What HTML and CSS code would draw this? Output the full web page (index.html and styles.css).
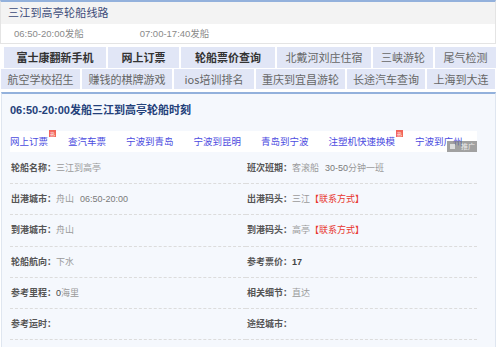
FILE: index.html
```html
<!DOCTYPE html>
<html>
  <head>
    <meta charset="UTF-8" />
    <title>三江到高亭轮船线路</title>
    <link rel="stylesheet" href="styles.css">
  </head>
  <body>
    <div class="line-box">
      <div class="line-title">三江到高亭轮船线路</div>
      <div class="line-times">
        <span class="time"><em>06:50-20:00</em>发船</span>
        <span class="time"><em>07:00-17:40</em>发船</span>
      </div>
    </div>

    <div class="hot-links row-a">
      <a href="#">富士康翻新手机</a>
      <a href="#">网上订票</a>
      <a href="#">轮船票价查询</a>
      <a href="#" class="plain">北戴河刘庄住宿</a>
      <a href="#" class="plain">三峡游轮</a>
      <a href="#" class="plain">尾气检测</a>
    </div>
    <div class="hot-links row-b">
      <a href="#">航空学校招生</a>
      <a href="#">赚钱的棋牌游戏</a>
      <a href="#">ios培训排名</a>
      <a href="#">重庆到宜昌游轮</a>
      <a href="#">长途汽车查询</a>
      <a href="#">上海到大连</a>
    </div>

    <div class="detail-box">
      <h2 class="detail-title"><em>06:50-20:00</em>发船三江到高亭轮船时刻</h2>
      <div class="ad-links">
        <a href="#">网上订票<i class="hot">热</i></a>
        <a href="#">查汽车票</a>
        <a href="#">宁波到青岛</a>
        <a href="#">宁波到昆明</a>
        <a href="#">青岛到宁波</a>
        <a href="#">注塑机快速换模<i class="hot">热</i></a>
        <a href="#">宁波到广州</a>
        <span class="ad-tag"><i class="ad-icon"></i>推广</span>
      </div>
      <div class="info-grid">
        <div class="cell"><b>轮船名称：</b>三江到高亭</div>
        <div class="cell"><b>班次班期：</b>客滚船 <em class="num">30-50</em>分钟一班</div>
        <div class="cell"><b>出港城市：</b>舟山 <em class="num">06:50-20:00</em></div>
        <div class="cell"><b>出港码头：</b>三江<span class="contact">【联系方式】</span></div>
        <div class="cell"><b>到港城市：</b>舟山</div>
        <div class="cell"><b>到港码头：</b>高亭<span class="contact">【联系方式】</span></div>
        <div class="cell"><b>轮船航向：</b>下水</div>
        <div class="cell"><b>参考票价：</b><em class="price">17</em></div>
        <div class="cell"><b>参考里程：</b><em class="dark">0</em>海里</div>
        <div class="cell"><b>相关细节：</b>直达</div>
        <div class="cell"><b>参考运时：</b></div>
        <div class="cell"><b>途经城市：</b></div>
      </div>
    </div>
  </body>
</html>
```

FILE: styles.css
```css
html,
body {
  margin: 0;
  padding: 0;
  background: #fff;
  font-family: "Liberation Sans", "Noto Sans CJK SC", sans-serif;
  overflow: hidden;
}

em,
i {
  font-style: normal;
}

a {
  text-decoration: none;
}

/* top route box */
.line-box {
  width: 494px;
  border: 1px solid #e4e4e4;
  border-top: 2px solid #93b1dc;
}
.line-title {
  height: 22px;
  line-height: 22px;
  padding-left: 7px;
  background: #f3f3f3;
  color: #3b4a78;
  font-size: 11px;
  letter-spacing: 0.2px;
}
.line-times {
  height: 19px;
  line-height: 19px;
  padding-left: 13px;
  font-size: 9.5px;
  color: #8a8a8a;
}
.time {
  display: inline-block;
  width: 123px;
}

/* hot link rows */
.hot-links {
  display: grid;
  column-gap: 2px;
  font-family: "Noto Sans CJK SC", sans-serif;
  font-size: 11px;
}
.hot-links a {
  background: #e1e6f6;
  text-align: center;
  white-space: nowrap;
  overflow: hidden;
}
.row-a {
  margin-top: 3px;
  padding-left: 4px;
  grid-template-columns: 102px 71px 94px 94px 60px 61px;
}
.row-a a {
  height: 21px;
  line-height: 21px;
  color: #333;
  font-weight: bold;
}
.row-a a.plain {
  font-weight: normal;
  color: #666;
}
.row-b {
  margin-top: 1px;
  padding-left: 1px;
  grid-template-columns: 79px 90px 80px 89px 78px 68px;
}
.row-b a {
  height: 20px;
  line-height: 20px;
  color: #666;
}

/* detail box */
.detail-box {
  margin: 3px 0 0 1px;
  width: 493px;
  height: 260px;
  background: #f5f8fd;
  border: 1px solid #dfe6f0;
  border-top: 2px solid #93b1dc;
}
.detail-title {
  margin: 0;
  height: 32px;
  line-height: 32px;
  padding-left: 8px;
  font-size: 11px;
  font-weight: bold;
  color: #23407a;
}
.detail-title em {
  font-family: "Liberation Sans", sans-serif;
}
.ad-links {
  position: relative;
  margin: 5px 18px 0 8px;
  height: 21px;
  line-height: 21px;
  background: #fff;
  display: flex;
  gap: 20px;
  font-family: "Noto Sans CJK SC", sans-serif;
  font-size: 9.5px;
}
.ad-links a {
  position: relative;
  color: #4b4be0;
}
.hot {
  position: absolute;
  top: -1px;
  right: -8px;
  width: 7px;
  height: 7px;
  line-height: 7px;
  background: #f2645a;
  color: #fff;
  font-size: 5px;
  text-align: center;
}
.ad-tag {
  position: absolute;
  right: 0;
  bottom: 0;
  width: 30px;
  height: 11px;
  line-height: 11px;
  background: rgba(110, 110, 110, 0.65);
  color: #eee;
  font-size: 7px;
  text-align: right;
  padding-right: 2px;
  box-sizing: border-box;
}
.ad-icon {
  position: absolute;
  left: 3px;
  top: 3px;
  width: 5px;
  height: 5px;
  background: #ddd;
}

/* info table */
.info-grid {
  margin: 1px 18px 0 8px;
  display: grid;
  grid-template-columns: 236px 1fr;
  font-family: "Noto Sans CJK SC", sans-serif;
  font-size: 9px;
  color: #9a9a9a;
}
.cell {
  height: 30.2px;
  line-height: 30.2px;
  padding-left: 1px;
  border-bottom: 1px dashed #dcdcdc;
  white-space: nowrap;
}
.cell b {
  color: #555;
}
.num {
  font-family: "Liberation Sans", sans-serif;
  color: #7a7a7a;
  margin-left: 4px;
}
.price,
.dark {
  font-family: "Liberation Sans", sans-serif;
  color: #444;
}
.price {
  font-weight: bold;
}
.contact {
  color: #e8362e;
}
```
